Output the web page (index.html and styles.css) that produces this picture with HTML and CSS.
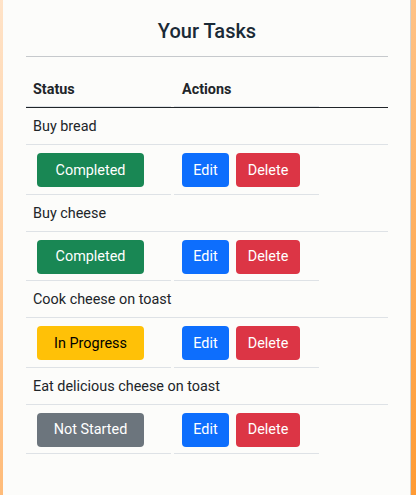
FILE: index.html
```html
<!DOCTYPE html>
<html>
<head>
<meta charset="utf-8">
<link rel="stylesheet" href="styles.css">
</head>
<body>
<div class="card">
  <h2 class="title">Your Tasks</h2>
  <div class="rule"></div>
  <div class="table">
    <div class="thead">
      <div class="th">Status</div>
      <div class="th">Actions</div>
    </div>
    <div class="task">
      <div class="task-name">Buy bread</div>
      <div class="task-row">
        <div class="cell status-cell"><span class="btn btn-status completed">Completed</span></div>
        <div class="cell actions-cell"><span class="btn btn-edit">Edit</span><span class="btn btn-delete">Delete</span></div>
      </div>
    </div>
    <div class="task">
      <div class="task-name">Buy cheese</div>
      <div class="task-row">
        <div class="cell status-cell"><span class="btn btn-status completed">Completed</span></div>
        <div class="cell actions-cell"><span class="btn btn-edit">Edit</span><span class="btn btn-delete">Delete</span></div>
      </div>
    </div>
    <div class="task">
      <div class="task-name">Cook cheese on toast</div>
      <div class="task-row">
        <div class="cell status-cell"><span class="btn btn-status progress">In Progress</span></div>
        <div class="cell actions-cell"><span class="btn btn-edit">Edit</span><span class="btn btn-delete">Delete</span></div>
      </div>
    </div>
    <div class="task">
      <div class="task-name">Eat delicious cheese on toast</div>
      <div class="task-row">
        <div class="cell status-cell"><span class="btn btn-status notstarted">Not Started</span></div>
        <div class="cell actions-cell"><span class="btn btn-edit">Edit</span><span class="btn btn-delete">Delete</span></div>
      </div>
    </div>
  </div>
</div>
</body>
</html>
```
FILE: styles.css
```css
html, body {
  margin: 0;
  height: 100%;
}
body {
  background: linear-gradient(135deg, #ffe3c8 0%, #ffbf80 50%, #ff9a33 100%);
  font-family: Roboto, "Noto Sans", sans-serif;
  font-size: 14.4px;
  line-height: 21px;
  color: #212529;
  overflow: hidden;
}
.card {
  box-sizing: border-box;
  margin-left: 3px;
  width: 408px;
  height: 495px;
  background: #fcfcfa;
  border-right: 1px solid #d2d2d2;
  padding: 19px 22px 0 23px;
}
.title {
  margin: 0;
  font-size: 20px;
  line-height: 24px;
  font-weight: 500;
  text-align: center;
  color: #1a2a36;
}
.rule {
  margin-top: 13px;
  height: 1px;
  background: #c6c9cc;
}
.table {
  margin-top: 14px;
}
.thead {
  display: flex;
  gap: 3px;
  border-bottom: 1px solid #212529;
}
.th {
  width: 145px;
  box-sizing: border-box;
  padding: 8px 7px 6px;
  font-weight: 700;
  border-bottom: 1px solid #dee2e6;
}
.th + .th {
  padding-left: 8px;
}
.task-name {
  padding: 8px 7px 7px;
  border-bottom: 1px solid #dee2e6;
}
.task-row {
  display: flex;
  gap: 3px;
}
.cell {
  width: 145px;
  box-sizing: border-box;
  padding: 8px 0 6.5px;
  border-bottom: 1px solid #dee2e6;
  display: flex;
}
.status-cell {
  padding-left: 11px;
}
.actions-cell {
  padding-left: 8px;
  gap: 7px;
}
.btn {
  display: flex;
  align-items: center;
  justify-content: center;
  height: 34px;
  border-radius: 4px;
  color: #fff;
  box-sizing: border-box;
}
.btn-status {
  width: 107px;
}
.completed { background: #198754; }
.progress { background: #ffc107; color: #000; }
.notstarted { background: #6c757d; }
.btn-edit { width: 47px; background: #0d6efd; }
.btn-delete { width: 64px; background: #dc3545; }
```
